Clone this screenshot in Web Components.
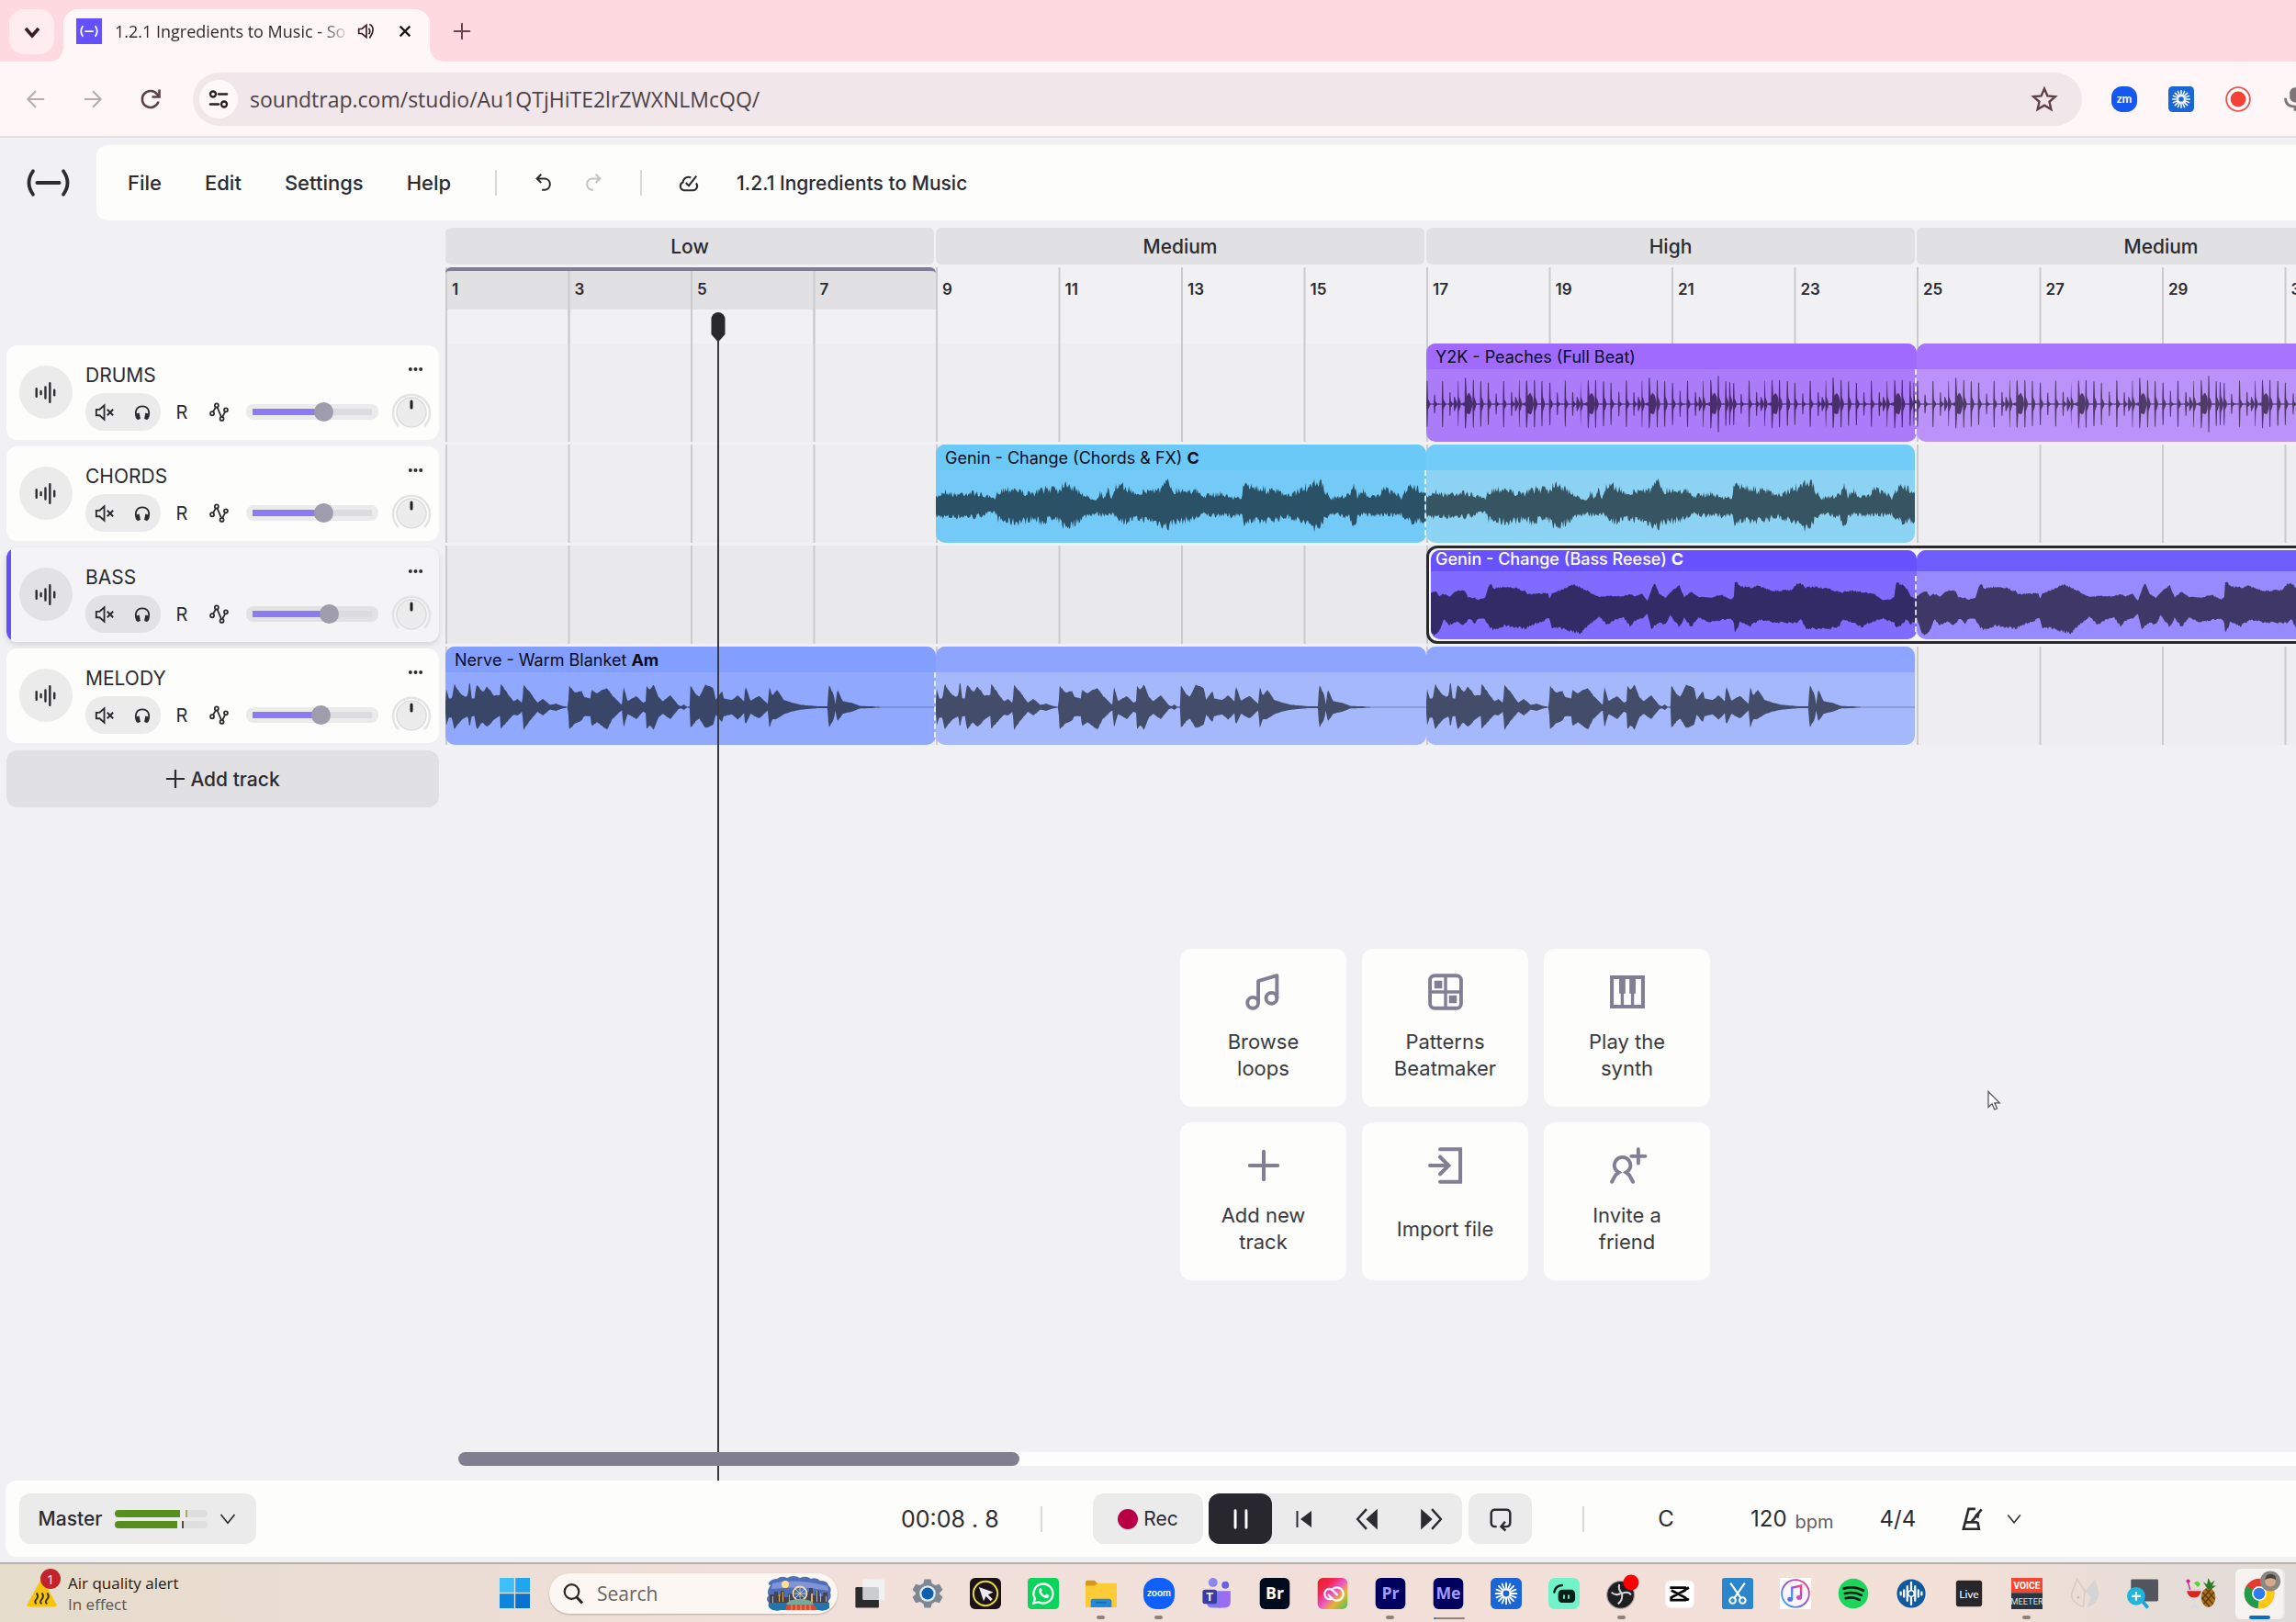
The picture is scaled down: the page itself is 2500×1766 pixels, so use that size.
<!DOCTYPE html>
<html lang="en">
<head>
<meta charset="utf-8">
<title>1.2.1 Ingredients to Music - Soundtrap</title>
<style>
    html, body {
        margin: 0;
        height: 100%;
        overflow: hidden;
    }

    body {
        --ink: #2b2b30;
        --app-bg: #f1f1f4;
        --panel: #fdfdfc;
        --accent: #8b7bf3;
        --section: 534px;
        font-family: Inter, "Liberation Sans", sans-serif;
        font-size: 21px;
        color: var(--ink);
    }
</style>
</head>
<body>
<studio-window></studio-window>

<script>
const ICONS = {
    chevron: '<path d="M5 8l7 8 7-8" fill="none" stroke="currentColor" stroke-width="2.2"/>',
    thinChevron: '<path d="M3 6l9 11 9-11" fill="none" stroke="currentColor" stroke-width="2"/>',
    boldChevron: '<path d="M5 8l7 8 7-8" fill="none" stroke="currentColor" stroke-width="3.6"/>',
    brand: '<rect width="24" height="24" fill="#6450ff"/><path d="M6 7.5q-3 4.500 0 9M18 7.500q3 4.500 0 9M8.500 12h7" fill="none" stroke="#fff" stroke-width="1.500" stroke-linecap="round"/>',
    speaker: '<path d="M2 9h4l6-5v16l-6-5H2z" fill="none" stroke="currentColor" stroke-width="2"/><path d="M15 8q3 4 0 8M16 3q9 4 0 18" fill="none" stroke="currentColor" stroke-width="2"/>',
    cross: '<path d="M4 4l16 16M20 4L4 20" stroke="currentColor" stroke-width="3.400"/>',
    plus: '<path d="M12 2v20M2 12h20" stroke="currentColor" stroke-width="2.400" stroke-linecap="round"/>',
    back: '<path d="M22 12H3M12 2.500L2.500 12l9.500 9.500" fill="none" stroke="currentColor" stroke-width="2.200"/>',
    forward: '<path d="M2 12h19M12 2.500l9.500 9.500-9.500 9.500" fill="none" stroke="currentColor" stroke-width="2.200"/>',
    reload: '<path d="M20.500 14.500A9 9 0 1 1 19 6.500l2 2" fill="none" stroke="currentColor" stroke-width="2.600"/><path d="M21.500 1.500v8h-8" fill="none" stroke="currentColor" stroke-width="2.600"/>',
    tune: '<path d="M12 6.500h9M3 17.500h9" stroke="currentColor" stroke-width="2.600" stroke-linecap="round"/><circle cx="6" cy="6.500" r="3" fill="none" stroke="currentColor" stroke-width="2.300"/><circle cx="18" cy="17.500" r="3" fill="none" stroke="currentColor" stroke-width="2.300"/>',
    star: '<path d="M12 2.800l2.700 6.300 6.800.6-5.100 4.500 1.500 6.700-5.900-3.500-5.900 3.500 1.500-6.700-5.100-4.500 6.800-.6z" fill="none" stroke="currentColor" stroke-width="1.900"/>',
    zm: '<rect width="24" height="24" rx="10" fill="#1558f0"/><text x="12" y="15.600" text-anchor="middle" font-family="Lato" font-weight="700" font-size="11" fill="#fff">zm</text>',
    burst: '<rect width="24" height="24" rx="4" fill="#1a66d6"/><path d="M12 4v16M4 12h16M6.300 6.300l11.400 11.400M17.700 6.300L6.300 17.700M8.900 4.600l6.200 14.800M15.100 4.600L8.900 19.400M4.600 8.900l14.800 6.200M4.600 15.100l14.800-6.200" stroke="#fff" stroke-width="1.300" stroke-linecap="round"/><circle cx="12" cy="12" r="3" fill="#1a66d6" stroke="#fff" stroke-width="1.200"/>',
    recorder: '<circle cx="12" cy="12" r="11" fill="#fff" stroke="#f0524e" stroke-width="1.600"/><circle cx="12" cy="12" r="7.200" fill="#f44336"/>',
    mic: '<rect x="7" y="1" width="10" height="14" rx="5" fill="currentColor"/><path d="M3 11q0 8 9 8t9-8M12 19v4" fill="none" stroke="currentColor" stroke-width="2.400"/>',
    logo: '<g fill="none" stroke="currentColor" stroke-linecap="round"><path d="M5 3.500q-6 8.500 0 17M27 3.500q6 8.500 0 17" stroke-width="2.500"/><path d="M8 12h16" stroke-width="2.700"/></g>',
    undo: '<path d="M9 2L4 7l5 5M5 7h8.500a6.800 6.800 0 0 1 0 13.500H10" fill="none" stroke="currentColor" stroke-width="2.200"/>',
    redo: '<path d="M15 2l5 5-5 5M19 7h-8.500a6.800 6.800 0 0 0 0 13.500H12" fill="none" stroke="currentColor" stroke-width="2.200"/>',
    cloud: '<path d="M14.500 6a6.500 6.500 0 0 0-9.500 5.500A5 5 0 0 0 6 21h11a5 5 0 0 0 3.500-8.500" fill="none" stroke="currentColor" stroke-width="2.200"/><path d="M8.500 12l3.500 3.500 9-11.500" fill="none" stroke="currentColor" stroke-width="2.200"/>',
    wave: '<path d="M2.500 8v8M7 10.500v3M11.500 6.500v11M16 2.500v19M20.500 9.500v5" stroke="currentColor" stroke-width="2.200" stroke-linecap="round"/>',
    dots: '<circle cx="4" cy="12" r="2.800" fill="currentColor"/><circle cx="12" cy="12" r="2.800" fill="currentColor"/><circle cx="20" cy="12" r="2.800" fill="currentColor"/>',
    mute: '<path d="M2 8.500h4l5.500-5v17l-5.500-5H2z" fill="none" stroke="currentColor" stroke-width="2"/><path d="M15 8.500l7 7M22 8.500l-7 7" stroke="currentColor" stroke-width="2.200"/>',
    phones: '<path d="M5 20C1 10 5 4 12 4s11 6 7 16" fill="none" stroke="currentColor" stroke-width="2.200"/><path d="M3 14l5-1.500 1.500 8L5.500 22zM21 14l-5-1.500-1.500 8L18.500 22z" fill="currentColor"/>',
    automation: '<g fill="none" stroke="currentColor" stroke-width="2"><circle cx="3.500" cy="14" r="2.300"/><circle cx="9" cy="4" r="2.300"/><circle cx="15.500" cy="20.500" r="2.300"/><circle cx="20.500" cy="9.500" r="2.300"/><path d="M4.500 12l3.500-6M9.800 6.200l5 12M16.200 18.300l3.500-6.700"/></g>',
    notes: '<g fill="none" stroke="currentColor" stroke-width="2.300"><circle cx="5" cy="19" r="3.500"/><circle cx="17" cy="16" r="3.500"/><path d="M8.500 19V5L20.500 1.500V16" stroke-linejoin="round"/></g>',
    pads: '<rect x="2" y="1.500" width="20" height="21" rx="3" fill="none" stroke="currentColor" stroke-width="2.300"/><path d="M12 2v20M2 12h20" stroke="currentColor" stroke-width="2"/><path d="M4.800 4.800h5v5h-5zM14.200 14.200h5v5h-5z" fill="currentColor"/>',
    piano: '<path d="M2 2.500h20v19H2z" fill="none" stroke="currentColor" stroke-width="2.400"/><path d="M8.700 12v9M15.300 12v9" stroke="currentColor" stroke-width="2"/><path d="M6.700 3h4v10h-4zM13.300 3h4v10h-4z" fill="currentColor"/>',
    add: '<path d="M12 3v18M3 12h18" stroke="currentColor" stroke-width="2.400" stroke-linecap="round"/>',
    importFile: '<path d="M8.500 1.500h13v21h-13M2 12h11M8.500 6.500L14 12l-5.500 5.500" fill="none" stroke="currentColor" stroke-width="2.400" stroke-linecap="round"/>',
    invite: '<path d="M2 22.500l2.500-4.500 2-1.500a5.200 5.200 0 1 1 4.600 0l2 1.500 2.500 4.500M19 1.500v9M14.500 6h9" fill="none" stroke="currentColor" stroke-width="2.300" stroke-linecap="round"/>',
    pause: '<path d="M6.500 3.500v17M17.500 3.500v17" stroke="currentColor" stroke-width="2.700" stroke-linecap="round"/>',
    toStart: '<path d="M4.500 3v18" stroke="currentColor" stroke-width="2"/><path d="M20 3v18L8 12z" fill="currentColor"/>',
    rewind: '<path d="M11 2L2 12l9 10" fill="none" stroke="currentColor" stroke-width="2.300"/><path d="M22 1.500v21L10.500 12z" fill="currentColor"/>',
    fastForward: '<path d="M13 2l9 10-9 10" fill="none" stroke="currentColor" stroke-width="2.300"/><path d="M2 1.500v21L13.500 12z" fill="currentColor"/>',
    loop: '<path d="M8 19.500H6a3.500 3.500 0 0 1-3.500-3.500V6A3.500 3.500 0 0 1 6 2.500h12A3.500 3.500 0 0 1 21.500 6v10a3.500 3.500 0 0 1-3.500 3.500h-5M16.500 14.500L12.500 19.500l4.500 4" fill="none" stroke="currentColor" stroke-width="2.300"/>',
    metronome: '<path d="M15 2.500H8.500L3.500 22h15l-1.300-7M5.500 15.500h11.500M11 15.500L21 3" fill="none" stroke="currentColor" stroke-width="2.400"/><path d="M14 9l4 3 1-4-2-2z" fill="currentColor"/>',
    warning: '<path d="M12 2.500q1 0 1.700 1.200l9 16.300q1 2-1 2.300H2.300q-2-.3-1-2.300l9-16.300Q11 2.500 12 2.500z" fill="#f6c40c"/><path d="M8 12q2 2.200 0 4.500t0 3.500M12 12q2 2.200 0 4.500t0 3.500M16 12q2 2.200 0 4.500t0 3.500" fill="none" stroke="#3c3410" stroke-width="1.400"/>',
    windows: '<path d="M0 0h11.500v11.500H0z" fill="#3cc0f7"/><path d="M12.500 0H24v11.500H12.500z" fill="#1ea5ee"/><path d="M0 12.500h11.500V24H0z" fill="#0f86de"/><path d="M12.500 12.500H24V24H12.500z" fill="#0872ce"/>',
    search: '<circle cx="10.500" cy="10" r="7.800" fill="none" stroke="currentColor" stroke-width="2.200"/><path d="M16 16l6 6.500" stroke="currentColor" stroke-width="3"/>',
    skyline: '<path d="M4 10Q0 9 3 6t8-3q5-4 11-1 7-4 14 0 7-3 12 1 6-2 10 2 8 0 9 5 4 3 2 8 2 5-2 9 2 6-8 7-5 4-11 2H17q-6 3-10 0-7-1-5-7-4-4 0-8-3-4 2-11z" fill="#4f70b8"/><path d="M6 8q24-6 60 3l1 5q-28-6-62-2z" fill="#8394d6"/><circle cx="20" cy="9" r="4" fill="#ffe08c"/><path d="M3 20h5v-3h4v5h3v-6h4v7h4v-4h5v-4h3v8h12v-6h3v-4h4v8h3v-5h4v6h4v-4h5v14H3z" fill="#454455"/><path d="M6 22h1v8H6zM13 20h1v8h-1zM17 17h1v11h-1zM24 20h1v8h-1zM48 19h2v10h-2zM54 16h1v12h-1zM58 19h1v9h-1zM64 22h1v6h-1z" fill="#e8b04a"/><circle cx="36" cy="19" r="7.500" fill="none" stroke="#eed9a0" stroke-width="1.800"/><path d="M36 12v14M29 19h14M31 14l10 10M41 14L31 24" stroke="#eed9a0" stroke-width=".8"/><path d="M2 29h66v6q-5 4-12 2H14q-9 2-12-4z" fill="#2474a8"/><path d="M21 31q2-6 15-6t15 6z" fill="#78aa9c"/><path d="M22 31h29l4 6H20z" fill="#d94a30"/><path d="M27 31v6M32 31v6M37 31v6M42 31v6M47 31v6" stroke="#ffb08a" stroke-width=".8"/>',
    taskView: '<rect x="1" y="7" width="18" height="16" rx="1" fill="#2c2b2b"/><rect x="6.500" y="1" width="17" height="16" rx="1" fill="#f3f5f6" opacity=".8"/>',
    settings: '<path d="M9.500 1h5l.8 3.200 2.600 1.500 3.200-.9 2.500 4.300-2.400 2.300v1.200l2.400 2.300-2.500 4.300-3.200-.9-2.600 1.500-.8 3.200h-5l-.8-3.200-2.600-1.500-3.200.9-2.500-4.300 2.400-2.300v-1.200L.4 9.100l2.500-4.300 3.200.9 2.600-1.500z" fill="#7c8791"/><circle cx="12" cy="12" r="6.200" fill="#dcecf7"/><circle cx="12" cy="12" r="4.600" fill="#0f5fae"/>',
    pointer: '<rect width="24" height="24" rx="4" fill="#1d1217"/><circle cx="12" cy="12" r="9.300" fill="none" stroke="#e5de2b" stroke-width="1.400"/><path d="M7 7l11 4-4 1.800 3.500 3.500-1.500 1.500-3.600-3.600-1.800 3.700z" fill="#e9e9ee"/>',
    whatsapp: '<rect width="24" height="24" rx="3" fill="#0bd45c"/><path d="M4.500 19.500l1.100-3.700a7.400 7.400 0 1 1 2.800 2.700z" fill="none" stroke="#fff" stroke-width="1.600"/><path d="M9.200 8q.8-1 1.500.3l.5 1.400-.8 1.100q1 1.900 2.900 2.700l1-1.200 2 1q.6 1.700-1.300 2.300-1.800.5-4.600-2-2.600-2.800-1.200-5.600z" fill="#fff"/>',
    folder: '<path d="M0 3.500q0-1.500 1.500-1.500H7l2.500 2.500-2 2H0z" fill="#d9971a"/><path d="M0 6h7l2.500-2H24v18.500H0z" fill="#fdcb35"/><path d="M4 22.500V18q0-2 2-2h12q2 0 2 2v4.500z" fill="#2389d6"/><path d="M8 19h8" stroke="#0b5c9f" stroke-width=".8"/>',
    zoomApp: '<rect width="24" height="24" rx="10.500" fill="#0f60fb"/><text x="12" y="14.200" text-anchor="middle" font-family="Lato" font-weight="700" font-size="7.500" fill="#fff">zoom</text>',
    teams: '<circle cx="9" cy="3.500" r="3.500" fill="#8a87ef"/><circle cx="18.500" cy="5.500" r="2.800" fill="#6b5fe0"/><path d="M4 10h11v13H9q-5 0-5-5z" fill="#7f79ea"/><path d="M15 10h7.500v8q0 5-5 5H13z" fill="#9a6cf0"/><rect x="1" y="9" width="11" height="11" rx="2" fill="#3b3ba8"/><text x="6.500" y="17.800" text-anchor="middle" font-family="Roboto" font-weight="700" font-size="9" fill="#fff">T</text>',
    bridge: '<rect x=".5" width="23" height="24" rx="4" fill="#000b1d"/><text x="12" y="16.300" text-anchor="middle" font-family="Open Sans" font-weight="700" font-size="12.500" fill="#fff">Br</text>',
    creative: '<defs><linearGradient id="cc" x1="0" y1="0" x2="1" y2="1"><stop offset="0" stop-color="#e2231a"/><stop offset=".3" stop-color="#f5265b"/><stop offset=".5" stop-color="#e857c8"/><stop offset=".7" stop-color="#e9b62b"/><stop offset="1" stop-color="#3fc46a"/></linearGradient></defs><rect x=".5" width="23" height="24" rx="4" fill="url(#cc)"/><path d="M11.500 15.500l-1 .8A4 4 0 1 1 9.200 8.400q1.800 0 3.200 1.500l3 3M12 8.500A5 5 0 1 1 15 17.300q-2.200 0-3.500-1.400L8.800 13" fill="none" stroke="#fff" stroke-width="1.600" stroke-linecap="round"/>',
    premiere: '<rect x=".5" width="23" height="24" rx="4" fill="#00005e"/><text x="12" y="16.300" text-anchor="middle" font-family="Open Sans" font-weight="700" font-size="12.500" fill="#a39bff">Pr</text>',
    encoder: '<rect x=".5" width="23" height="24" rx="4" fill="#00005e"/><text x="12" y="16.300" text-anchor="middle" font-family="Open Sans" font-weight="700" font-size="12.500" fill="#a39bff">Me</text>',
    mint: '<rect width="24" height="24" rx="5" fill="#71f3ca"/><rect x="7.500" y="9" width="13" height="10" rx="3" fill="#052019"/><path d="M4.500 11q1-5 6-5.300" fill="none" stroke="#052019" stroke-width="1.700" stroke-linecap="round"/><path d="M12 13v3M15.500 13v3" stroke="#71f3ca" stroke-width="1.300"/>',
    obs: '<circle cx="11" cy="13" r="10.500" fill="#1f1e21" stroke="#a3a1a3" stroke-width=".8"/><path d="M10 5q-1 4 2 7 5-2 7 1M11 12q-4 2-7-1M12 12q1 5-3 8" fill="none" stroke="#d9d7da" stroke-width="1.400"/><circle cx="19" cy="3.500" r="6" fill="#fb0007"/>',
    capcut: '<rect x="1" y="2" width="22" height="21" rx="4" fill="#fff"/><path d="M5.500 8.500V7.500H16v2L5.500 15v2H16v-2L5.500 9.500M16 9l3-1.500M16 15.500l3 1.500" fill="none" stroke="#050505" stroke-width="2"/>',
    snip: '<rect width="24" height="24" rx="2" fill="#2b86cb"/><g fill="none" stroke="#fff" stroke-width="1.500"><circle cx="8.200" cy="17.300" r="2.300"/><circle cx="15.800" cy="17.300" r="2.300"/><path d="M6.500 4l8 11.500M17.500 4l-8 11.500"/></g>',
    itunes: '<defs><linearGradient id="tune" x1="0" y1="1" x2="1" y2="0"><stop offset="0" stop-color="#28b7f4"/><stop offset=".5" stop-color="#8b55e0"/><stop offset="1" stop-color="#f8456a"/></linearGradient></defs><rect width="24" height="24" fill="#fff"/><circle cx="12" cy="12" r="10.500" fill="#fbf5fb" stroke="url(#tune)" stroke-width="1.300"/><path d="M9.300 16V7.500l7-1.500v8.500" fill="none" stroke="url(#tune)" stroke-width="1.700"/><ellipse cx="7.900" cy="16.400" rx="2.100" ry="1.800" fill="#5a72ea"/><ellipse cx="14.900" cy="15" rx="2.100" ry="1.800" fill="#c44fc2"/>',
    spotify: '<circle cx="12" cy="12" r="11.500" fill="#1dd45f"/><path d="M4.700 8.200q8-2.300 15 1.500M5.500 12q7-1.900 12.800 1.300M6.200 15.600q5.800-1.500 10.500 1.200" fill="none" stroke="#0a1a10" stroke-width="1.900" stroke-linecap="round"/>',
    pulse: '<circle cx="12" cy="12" r="11" fill="#10599c"/><path d="M4 11v2M6.500 9.500v5M9 6.500v11M12 3.500v17M15 6.500v11M17.500 9.500v5M20 11v2" stroke="#fff" stroke-width="1.600" stroke-linecap="round"/><circle cx="12" cy="12" r="2.300" fill="#10599c" stroke="#fff"/>',
    live: '<rect x="2" y="2" width="20" height="20" rx="2" fill="#26262b"/><text x="12" y="15.200" text-anchor="middle" font-family="Lato" font-size="8.500" fill="#fff">Live</text>',
    voicemeeter: '<path d="M0 0h24v11.500H0z" fill="#f5472f"/><path d="M0 11.500h24V24H0z" fill="#2b3443"/><text x="12" y="8.700" text-anchor="middle" font-family="Roboto" font-weight="700" font-size="7.200" fill="#fff">VOICE</text><text x="12" y="20.300" text-anchor="middle" font-family="Roboto" font-size="6.600" fill="#dfe3ea">MEETER</text>',
    fox: '<path d="M2 12L6 1l6 9-1 12q-6-1-9-7z" fill="none" stroke="#d6cac4"/><path d="M12 10l8-9 3 11q-1 8-10 11l4-8z" fill="#c6cdd2" opacity=".6"/><circle cx="7" cy="15" r="1" fill="#c8bcb6"/>',
    magnify: '<rect x="3" y="1" width="21" height="17" rx="1" fill="#53565e"/><path d="M12 18l4 5" stroke="#1ca5d8" stroke-width="2.600"/><circle cx="7" cy="14" r="7" fill="#1fb5dd"/><path d="M7 10.500v7M3.500 14h7" stroke="#fff" stroke-width="1.500"/>',
    fruit: '<ellipse cx="18" cy="15" rx="5.500" ry="7.500" fill="#a8711c"/><path d="M13.500 11l8 9M13 15l6 7M16 8.500l7 8M22.500 11l-8 9M20 8.500l-7 8" stroke="#5f3a0e"/><path d="M17 8l-3-5 3 2 1-5 2 4 3-2-2 4 3 0-4 3z" fill="#2c7a24"/><path d="M1 8h12q0 7-5 8v5l3 2H4l3-2v-5Q1 15 1 8z" fill="#d5dbe0"/><path d="M1.500 10h11q-1 5-5.500 5t-5.500-5z" fill="#d9251c"/><path d="M4 9L2 2" stroke="#d11fa0"/><circle cx="2.500" cy="2.500" r="1.500" fill="#d11fa0"/><path d="M7 4q3-3 5 1l-2 2z" fill="#5fd03c"/>',
    chrome: '<circle cx="12" cy="12" r="11.500" fill="#e33b2e"/><path d="M12 12L2 6.300A11.500 11.500 0 0 0 11 23.400z" fill="#1e9e4a"/><path d="M12 12L11 23.400A11.500 11.500 0 0 0 22.500 7H12z" fill="#fdc812"/><circle cx="12" cy="12" r="5.600" fill="#fff"/><circle cx="12" cy="12" r="4.500" fill="#2f7cf0"/><circle cx="20.500" cy="2.500" r="7.800" fill="#8a8782"/><circle cx="20.500" cy="2.500" r="4.200" fill="#d8a88e"/><path d="M16.300 1.500q1-5 4.500-4.500 4 0 4 4.500-4-2.500-8.500 0z" fill="#4c423c"/>',
};

// Envelope points: [x, peak above the centre line, peak below], loop length in the same units.
const WAVES = {
    melody: {
        length: 1117, step: 2, grain: 0.06, colors: ['#3a4668', '#434c68'],
        points: [[0, 20, 20], [2, 60, 60], [8, 30, 35], [15, 30, 35], [20, 78, 75], [35, 45, 45], [45, 35, 35], [51, 40, 30], [54, 80, 60], [57, 80, 60], [59, 30, 30], [66, 30, 30], [71, 78, 75], [85, 50, 50], [95, 70, 68], [110, 40, 42], [124, 40, 30], [126, 78, 72], [140, 50, 50], [155, 20, 25], [165, 28, 28], [175, 14, 14], [178, 75, 75], [190, 55, 50], [210, 15, 15], [222, 28, 28], [238, 8, 8], [252, 12, 12], [265, 5, 5], [279, 1, 1], [282, 72, 75], [295, 50, 55], [310, 55, 45], [316, 34, 30], [330, 30, 30], [333, 60, 65], [345, 45, 50], [355, 58, 60], [368, 65, 76], [380, 40, 40], [400, 10, 12], [403, 12, 12], [405, 74, 72], [415, 20, 22], [435, 38, 40], [450, 15, 15], [456, 20, 20], [458, 72, 74], [465, 60, 60], [475, 75, 75], [485, 35, 35], [495, 20, 22], [512, 40, 40], [530, 8, 8], [537, 3, 3], [543, 10, 10], [549, 2, 2], [556, 2, 2], [558, 74, 70], [570, 45, 48], [578, 35, 38], [592, 75, 70], [610, 65, 60], [616, 25, 25], [630, 55, 50], [634, 30, 30], [652, 24, 24], [666, 40, 42], [680, 20, 20], [683, 72, 60], [695, 22, 22], [715, 38, 38], [735, 10, 10], [737, 72, 72], [745, 38, 40], [755, 60, 40], [770, 25, 24], [790, 15, 14], [810, 8, 8], [850, 3, 3], [870, 3, 3], [873, 76, 68], [885, 40, 40], [888, 10, 12], [893, 60, 48], [905, 20, 22], [925, 15, 15], [945, 4, 4], [970, 3, 3], [990, 1, 1], [1117, 1, 1]],
    },
    chords: {
        length: 1117, step: 2, grain: 0.42, colors: ['#2b5166', '#375463'],
        points: [[0, 30, 45], [20, 58, 48], [40, 42, 48], [60, 48, 46], [90, 50, 48], [110, 38, 38], [135, 24, 28], [142, 56, 58], [160, 66, 68], [180, 68, 70], [200, 50, 65], [220, 44, 55], [240, 62, 70], [260, 66, 55], [270, 84, 66], [280, 55, 62], [295, 102, 90], [310, 70, 80], [330, 52, 56], [345, 32, 40], [365, 24, 34], [375, 52, 40], [385, 28, 36], [392, 60, 36], [400, 28, 40], [407, 70, 42], [430, 76, 68], [450, 52, 56], [470, 52, 58], [490, 62, 62], [510, 62, 74], [530, 96, 90], [540, 60, 66], [560, 62, 66], [580, 62, 58], [595, 56, 52], [605, 36, 36], [630, 42, 42], [650, 48, 38], [670, 32, 46], [690, 30, 36], [697, 34, 40], [700, 74, 68], [725, 76, 68], [740, 68, 66], [760, 58, 62], [780, 56, 56], [800, 36, 46], [820, 52, 56], [840, 72, 74], [855, 68, 80], [868, 104, 98], [878, 84, 68], [890, 50, 56], [900, 26, 32], [930, 36, 42], [945, 52, 56], [952, 86, 86], [960, 34, 50], [972, 64, 34], [985, 28, 40], [995, 48, 46], [1005, 34, 40], [1022, 64, 40], [1045, 52, 42], [1060, 28, 36], [1067, 58, 66], [1080, 74, 64], [1100, 64, 66], [1117, 68, 64]],
    },
    bass: {
        length: 1046, step: 2, grain: 0.12, colors: ['#322b66', '#3f3866'],
        points: [[0, 30, 42], [10, 44, 95], [20, 50, 103], [28, 32, 90], [37, 40, 48], [50, 30, 68], [65, 52, 56], [80, 52, 70], [90, 28, 46], [103, 25, 62], [110, 20, 46], [125, 24, 50], [135, 74, 76], [145, 60, 86], [170, 65, 70], [190, 60, 76], [210, 50, 80], [215, 38, 76], [240, 40, 60], [260, 42, 46], [263, 20, 46], [268, 42, 82], [285, 52, 78], [310, 72, 90], [330, 62, 95], [350, 44, 62], [370, 30, 40], [385, 32, 66], [405, 32, 50], [420, 30, 40], [435, 40, 72], [445, 30, 54], [460, 42, 46], [472, 15, 30], [480, 54, 86], [487, 78, 70], [497, 40, 60], [510, 26, 66], [520, 42, 34], [540, 72, 76], [550, 28, 44], [565, 48, 76], [580, 30, 42], [605, 26, 60], [630, 36, 50], [650, 20, 46], [656, 30, 60], [658, 84, 100], [670, 66, 56], [690, 62, 72], [710, 66, 50], [740, 50, 60], [780, 52, 60], [790, 74, 62], [798, 74, 46], [809, 62, 78], [829, 64, 82], [859, 56, 82], [880, 46, 72], [889, 46, 50], [904, 50, 56], [929, 46, 74], [954, 40, 55], [974, 18, 46], [989, 20, 56], [998, 30, 60], [1002, 78, 78], [1012, 74, 70], [1024, 58, 50], [1034, 30, 66], [1046, 20, 50]],
    },
    drums: { length: 1115, step: 1, grain: 0.05, colors: ['#4a2d6b', '#4f3a68'], points: drumHits() },
};

const THEMES = {
    drums: [['#a06aff', '#ab7cfa'], ['#a773ff', '#ba92fa']],
    chords: [['#6bc9f7', '#73caf7'], ['#72ccf8', '#8cd2f2']],
    bass: [['#6852ff', '#7f6cff'], ['#705dff', '#978aff']],
    melody: [['#829fff', '#91a8ff'], ['#8da5ff', '#a5b8fc']],
};

// Eight bars of the same beat with a busier ending.
function drumHits() {
    const points = [];
    const hit = (x, peak, tail) => {
        points.push([x - 2, 2, 2], [x - 1, peak, peak * 0.97], [x + 1, peak, peak * 0.97], [x + 2, tail, tail], [x + 5, tail * 0.5, tail * 0.5], [x + 7, 2, 2]);
    };
    const step = 1115 / 64;
    for (let bar = 0; bar < 8; bar++) {
        const at = (n) => Math.round((bar * 8 + n) * step) + 2;
        hit(at(0), bar ? 72 : 78, 18);
        hit(at(1), 32 + bar * 3 % 14, 8);
        hit(at(2), 78, 16);
        hit(at(3), 40, 10);
        hit(at(3.55), 24, 18);
        hit(at(4), 78, 24);
        points.push([at(5) - 2, 6, 6], [at(5) - 1, bar % 3 ? 80 : 88, 80], [at(5) + 1, bar % 3 ? 80 : 88, 80], [at(5) + 3, 28, 30], [at(5) + 8, 38, 34], [at(5) + 11, 32, 32], [at(5) + 14, 22, 16]);
        hit(at(6), bar === 4 ? 96 : 80, 24);
        hit(at(7), 76, 24);
        if (bar === 7 || bar === 4) {
            hit(at(7.5), 72, 28);
        }
    }
    return points;
}

function wavePath(wave, width, centre) {
    let seed = 7;
    const noise = () => {
        seed = (seed * 16807) % 2147483647;
        return seed / 2147483647;
    };
    const scale = width / wave.length;
    const upper = [];
    const lower = [];
    let i = 0;
    for (let x = 0; x <= wave.length; x += wave.step) {
        while (i < wave.points.length - 2 && wave.points[i + 1][0] < x) i++;
        const [x0, u0, d0] = wave.points[i];
        const [x1, u1, d1] = wave.points[i + 1];
        const t = Math.min(1, Math.max(0, (x - x0) / (x1 - x0)));
        const up = (u0 + (u1 - u0) * t) * (1 - noise() * wave.grain);
        const down = (d0 + (d1 - d0) * t) * (1 - noise() * wave.grain);
        upper.push(`${(x * scale).toFixed(1)} ${(centre - up / 3).toFixed(1)}`);
        lower.unshift(`${(x * scale).toFixed(1)} ${(centre + down / 3).toFixed(1)}`);
    }
    return `M${upper.join('L')}L${lower.join('L')}Z`;
}

class StudioElement extends HTMLElement {
    constructor() {
        super();
        this.attachShadow({ mode: 'open' });
    }

    connectedCallback() {
        this.shadowRoot.innerHTML = `
            <style>
                * { box-sizing: border-box; }
                button { display: flex; align-items: center; font: inherit; color: inherit; background: none; border: 0; padding: 0; margin: 0; cursor: pointer; }
                input { font: inherit; color: inherit; background: none; border: 0; outline: 0; padding: 0; margin: 0; min-width: 0; }
                ${this.styles()}
            </style>
            ${this.render()}
        `;
    }

    styles() { return ''; }

    render() { return ''; }
}

class UiIcon extends StudioElement {
    styles() {
        const w = this.getAttribute('width') || this.getAttribute('size') || 24;
        return `
            :host { display: inline-block; flex: none; width: ${w}px; height: ${this.getAttribute('size') || 24}px; }
            svg { display: block; width: 100%; height: 100%; overflow: visible; }
        `;
    }

    render() {
        return `<svg viewBox="${this.getAttribute('box') || '0 0 24 24'}" aria-hidden="true">${ICONS[this.getAttribute('name')]}</svg>`;
    }
}

class BrowserTabs extends StudioElement {
    styles() {
        return `
            :host { display: flex; height: 67px; background: #fed9e0; color: #3a1d25; padding-left: 10px; font-family: "Open Sans", sans-serif; font-size: 18px; }
            .list { width: 49px; height: 49px; margin-top: 10px; border-radius: 16px; background: #ffecef; justify-content: center; }
            .tab { position: relative; display: flex; align-items: center; width: 399px; height: 57px; margin: 10px 0 0 10px; padding: 0 19px 10px 14px; border-radius: 16px 16px 0 0; background: #fff7f7; }
            .tab::before, .tab::after { content: ""; position: absolute; bottom: 0; width: 14px; height: 14px; }
            .tab::before { right: 100%; background: radial-gradient(circle at 0 0, transparent 13px, #fff7f7 14px); }
            .tab::after { left: 100%; background: radial-gradient(circle at 100% 0, transparent 13px, #fff7f7 14px); }
            .title { flex: 1; margin: 0 8px 0 14px; white-space: nowrap; overflow: hidden; color: #33282b; mask-image: linear-gradient(90deg, #000 88%, transparent); }
            .close { margin-left: 24px; color: #1d1518; }
            .new { margin-left: 25px; color: #6d4550; }
        `;
    }

    render() {
        return `
            <button class="list" aria-label="Search tabs"><ui-icon name="boldChevron" size="24"></ui-icon></button>
            <div class="tab">
                <ui-icon name="brand" size="28"></ui-icon>
                <span class="title">1.2.1 Ingredients to Music - So</span>
                <ui-icon name="speaker" size="20"></ui-icon>
                <button class="close" aria-label="Close tab"><ui-icon name="cross" size="16"></ui-icon></button>
            </div>
            <button class="new" aria-label="New tab"><ui-icon name="plus" size="20"></ui-icon></button>
        `;
    }
}

class BrowserToolbar extends StudioElement {
    styles() {
        return `
            :host { display: flex; align-items: center; height: 83px; background: #fff7f7; border-bottom: 2px solid #e8dfe2; padding-left: 28px; font-family: "Open Sans", sans-serif; font-size: 23px; color: #5e3f47; overflow: hidden; }
            .nav { display: flex; gap: 40px; margin-right: 34px; }
            .off { color: #b5aaac; }
            .address { flex: 1; display: flex; align-items: center; height: 58px; padding: 0 26px 0 7px; border-radius: 29px; background: #f1e6e9; }
            .site { width: 42px; height: 42px; border-radius: 50%; background: #fff8f9; justify-content: center; margin-right: 13px; color: #2a1d21; }
            input { flex: 1; color: #4d4246; }
            .extensions { display: flex; gap: 34px; width: 233px; padding-left: 32px; color: #7d7577; }
        `;
    }

    render() {
        return `
            <div class="nav">
                <button class="off" aria-label="Back"><ui-icon name="back" size="22"></ui-icon></button>
                <button class="off" aria-label="Forward"><ui-icon name="forward" size="22"></ui-icon></button>
                <button aria-label="Reload"><ui-icon name="reload" size="24"></ui-icon></button>
            </div>
            <div class="address">
                <button class="site" aria-label="Site information"><ui-icon name="tune" size="24"></ui-icon></button>
                <input type="text" aria-label="Address" value="soundtrap.com/studio/Au1QTjHiTE2lrZWXNLMcQQ/">
                <button aria-label="Bookmark"><ui-icon name="star" size="30"></ui-icon></button>
            </div>
            <div class="extensions">
                <ui-icon name="zm" size="28"></ui-icon>
                <ui-icon name="burst" size="28"></ui-icon>
                <ui-icon name="recorder" size="28"></ui-icon>
                <ui-icon name="mic" size="28"></ui-icon>
            </div>
        `;
    }
}

class StudioHeader extends StudioElement {
    styles() {
        return `
            :host { display: flex; height: 90px; padding-top: 8px; font-weight: 500; }
            .home { width: 105px; justify-content: center; }
            .bar { flex: 1; display: flex; align-items: center; padding-left: 34px; border-radius: 12px 0 0 12px; background: var(--panel); }
            nav { display: flex; gap: 47px; font-size: 22px; }
            .rule { width: 2px; height: 28px; background: #d9d9dc; margin: 0 40px; }
            .rule.first { margin-left: 48px; }
            .redo { margin-left: 32px; color: #c3c3c6; }
            .name { margin-left: 41px; }
        `;
    }

    render() {
        return `
            <button class="home" aria-label="Soundtrap"><ui-icon name="logo" width="49" size="36" box="0 0 32 24"></ui-icon></button>
            <div class="bar">
                <nav>
                    <button>File</button>
                    <button>Edit</button>
                    <button>Settings</button>
                    <button>Help</button>
                </nav>
                <span class="rule first"></span>
                <button aria-label="Undo"><ui-icon name="undo" size="22"></ui-icon></button>
                <button class="redo" aria-label="Redo"><ui-icon name="redo" size="22"></ui-icon></button>
                <span class="rule"></span>
                <ui-icon name="cloud" size="22"></ui-icon>
                <span class="name">1.2.1 Ingredients to Music</span>
            </div>
        `;
    }
}

class TrackCard extends StudioElement {
    styles() {
        return `
            :host { display: flex; height: 103px; padding: 16px 7px 9px 14px; border-radius: 12px; background: var(--panel); --chip: #ebebec; }
            :host([selected]) { background: linear-gradient(90deg, #6450ff 5px, #f4f4f7 5px); box-shadow: 0 3px 6px rgba(0, 0, 0, 0.12); --chip: #e2e2e4; }
            .avatar { width: 58px; height: 58px; margin-top: 6px; border-radius: 50%; background: var(--chip); display: grid; place-items: center; }
            .body { flex: 1; margin-left: 14px; }
            .top { display: flex; justify-content: space-between; align-items: center; height: 32px; font-size: 21px; }
            .more { align-self: flex-start; margin-right: 10px; }
            .controls { display: flex; align-items: center; height: 41px; margin-top: 4px; }
            .pill { display: flex; justify-content: space-between; align-items: center; width: 82px; height: 41px; padding: 0 10px; border-radius: 20px; background: var(--chip); }
            .rec { width: 20px; margin-left: 13px; justify-content: center; font-size: 20px; }
            .auto { margin: 0 19px 0 20px; }
            input { -webkit-appearance: none; appearance: none; width: 144px; height: 21px; }
            input::-webkit-slider-runnable-track {
                height: 17px; border-radius: 8px;
                background:
                    linear-gradient(90deg, var(--accent) var(--level), #dcdce0 var(--level)) 7px 5px / 130px 7px no-repeat,
                    var(--chip);
            }
            input::-webkit-slider-thumb { -webkit-appearance: none; width: 21px; height: 21px; margin-top: -2px; border-radius: 50%; background: #9f9cab; }
            .knob { width: 42px; height: 42px; margin-left: 15px; }
            .knob svg { display: block; overflow: visible; }
        `;
    }

    render() {
        const name = this.getAttribute('name');
        const volume = this.getAttribute('volume');
        return `
            <div class="avatar"><ui-icon name="wave" width="26" size="27"></ui-icon></div>
            <div class="body">
                <div class="top">
                    <span>${name}</span>
                    <button class="more" aria-label="${name} options"><ui-icon name="dots" width="17" size="20"></ui-icon></button>
                </div>
                <div class="controls">
                    <div class="pill">
                        <button aria-label="Mute"><ui-icon name="mute" size="22"></ui-icon></button>
                        <button aria-label="Solo"><ui-icon name="phones" size="20"></ui-icon></button>
                    </div>
                    <button class="rec">R</button>
                    <button class="auto" aria-label="Automation"><ui-icon name="automation" size="21"></ui-icon></button>
                    <input type="range" min="0" max="100" value="${volume}" style="--level:${volume}%" aria-label="${name} volume">
                    <div class="knob">
                        <svg width="42" height="42" viewBox="0 0 42 42">
                            <path d="M7 36A20 20 0 1 1 35 36" fill="none" stroke="#e3e3e5" stroke-width="2.500"/>
                            <circle cx="21" cy="21" r="16" fill="#ececed" stroke="#dcdcde" stroke-width="1.500"/>
                            <path d="M21 9v7" stroke="#1f1f22" stroke-width="3" stroke-linecap="round"/>
                        </svg>
                    </div>
                </div>
            </div>
        `;
    }
}

class TrackList extends StudioElement {
    styles() {
        return `
            :host { display: flex; flex-direction: column; gap: 7px; width: 485px; padding: 136px 7px 0; }
            .add { justify-content: center; gap: 5px; height: 62px; margin-top: 1px; border-radius: 12px; background: #e1e1e3; font-weight: 500; }
        `;
    }

    render() {
        return `
            <slot></slot>
            <button class="add"><ui-icon name="plus" size="22"></ui-icon>Add track</button>
        `;
    }
}

class TimeRuler extends StudioElement {
    styles() {
        return `
            :host { display: block; --line: linear-gradient(90deg, #cbcbce 2px, transparent 2px) 0 0 / calc(var(--section) / 4) 100%; }
            .names, .bars { display: flex; }
            .name { flex: none; width: var(--section); height: 40px; border: solid var(--app-bg); border-width: 0 2px 0 0; border-radius: 6px; background: #e1e1e3; background-clip: padding-box; display: grid; place-items: center; font-weight: 500; }
            .bars { margin-top: 3px; height: 83px; background: var(--line); font-size: 17px; font-weight: 600; }
            .span { flex: none; width: var(--section); display: grid; grid-template-columns: repeat(4, 1fr); padding-top: 10px; line-height: 28px; }
            .span span { padding-left: 7px; }
            .loop { background: var(--line), linear-gradient(#e1e1e3, #e1e1e3) 0 0 / 100% 42px no-repeat; border-top: 4px solid #7f7c95; border-radius: 6px 6px 0 0; padding-top: 6px; }
        `;
    }

    render() {
        const names = ['Low', 'Medium', 'High', 'Medium'];
        const span = (n) => [0, 2, 4, 6].map((k) => `<span>${n * 8 + k + 1}</span>`).join('');
        return `
            <div class="names">${names.map((n) => `<div class="name">${n}</div>`).join('')}</div>
            <div class="bars">${names.map((n, i) => `<div class="span${i ? '' : ' loop'}">${span(i)}</div>`).join('')}</div>
        `;
    }
}

class TrackLane extends StudioElement {
    styles() {
        const start = this.getAttribute('start') || 0;
        return `
            :host { display: flex; height: 107px; margin-bottom: 3px; padding-left: calc(var(--section) * ${start}); background: linear-gradient(90deg, #cbcbce 2px, transparent 2px) 0 0 / calc(var(--section) / 4) 100%, #eeeef0; overflow: hidden; }
            :host([selected]) { background-color: #e9e9eb; }
        `;
    }

    render() { return '<slot></slot>'; }
}

class AudioClip extends StudioElement {
    styles() {
        return `
            :host { display: flex; flex: none; height: 107px; font-size: 18px; color: #0c0c18; }
            :host([selected]) { border: 3px solid #29292d; border-radius: 12px; padding: 2px; background: #f4f4f8; color: #fff; font-weight: 500; }
            .part { position: relative; flex: none; width: var(--section); height: 100%; border-radius: 10px; overflow: hidden; }
            .part:last-of-type { width: calc(var(--section) - 2px); }
            :host([selected]) .part:first-of-type { width: calc(var(--section) - 5px); }
            .head { height: 28px; padding-left: 10px; line-height: 30px; white-space: nowrap; }
            :host([selected]) .head { height: 23px; padding-left: 5px; line-height: 20px; }
            svg { position: absolute; left: 0; top: 0; }
            :host([selected]) svg { top: -6px; }
            :host([selected]) .part:first-of-type svg { left: -5px; }
            .seam { border-right: 2px dashed #ffffffcc; position: absolute; right: 0; top: 28px; bottom: 8px; }
        `;
    }

    render() {
        const kind = this.getAttribute('kind');
        const wave = WAVES[kind];
        const count = Number(this.getAttribute('repeats'));
        const path = wavePath(wave, 534, 66);
        let html = '';
        for (let i = 0; i < count; i++) {
            const [head, body] = THEMES[kind][i ? 1 : 0];
            html += `
                <div class="part" style="background:${body}">
                    <div class="head" style="background:${head}">${i ? '' : '<slot></slot>'}</div>
                    <svg width="534" height="107" viewBox="0 0 534 107"><path d="${path}" fill="${wave.colors[i ? 1 : 0]}"/></svg>
                    ${i < count - 1 && !(kind === 'melody' && i) ? '<div class="seam"></div>' : ''}
                </div>
            `;
        }
        return html;
    }
}

class QuickAction extends StudioElement {
    styles() {
        return `
            :host { display: block; }
            button { flex-direction: column; width: 100%; height: 172px; padding: 25px 4px 0; border-radius: 12px; background: var(--panel); }
            ui-icon { color: #827e94; }
            .label { display: grid; place-items: center; height: 60px; margin-top: 17px; font-size: 22px; line-height: 29px; color: #3a3a3f; }
        `;
    }

    render() {
        return `
            <button>
                <ui-icon name="${this.getAttribute('icon')}" size="44" box="-1 -1 26 26"></ui-icon>
                <span class="label"><span><slot></slot></span></span>
            </button>
        `;
    }
}

class StudioTimeline extends StudioElement {
    styles() {
        return `
            :host { position: relative; display: flex; flex-direction: column; flex: 1; min-width: 0; padding-top: 8px; overflow: hidden; }
            .actions { display: grid; grid-template-columns: repeat(3, 181px); gap: 17px; justify-content: center; margin-top: 219px; padding-left: 162px; }
            .scroll { position: relative; height: 15px; margin: auto 0 16px 14px; border-radius: 8px 0 0 8px; background: #fdfdfd; z-index: 2; }
            .thumb { width: 611px; height: 15px; border-radius: 8px; background: #817e92; }
            .playhead { position: absolute; left: 289px; top: 100px; bottom: 0; width: 16px; }
            .playhead::after { content: ""; position: absolute; left: 7px; top: 30px; bottom: 0; width: 2px; background: #3a3a3e; }
            .playhead svg { display: block; }
        `;
    }

    render() {
        return `
            <time-ruler></time-ruler>
            <track-lane start="2"><audio-clip kind="drums" repeats="2">Y2K - Peaches (Full Beat)</audio-clip></track-lane>
            <track-lane start="1"><audio-clip kind="chords" repeats="2">Genin - Change (Chords &amp; FX) <b>C</b></audio-clip></track-lane>
            <track-lane start="2" selected><audio-clip kind="bass" repeats="2" selected>Genin - Change (Bass Reese) <b>C</b></audio-clip></track-lane>
            <track-lane><audio-clip kind="melody" repeats="3">Nerve - Warm Blanket <b>Am</b></audio-clip></track-lane>
            <div class="actions">
                <quick-action icon="notes">Browse<br>loops</quick-action>
                <quick-action icon="pads">Patterns<br>Beatmaker</quick-action>
                <quick-action icon="piano">Play the<br>synth</quick-action>
                <quick-action icon="add">Add new<br>track</quick-action>
                <quick-action icon="importFile">Import file</quick-action>
                <quick-action icon="invite">Invite a<br>friend</quick-action>
            </div>
            <div class="scroll"><div class="thumb"></div></div>
            <div class="playhead"><svg width="16" height="33" viewBox="0 0 16 33"><path d="M.5 7.500a7.500 7.500 0 0 1 15 0V24L8 32.500.5 24z" fill="#29292c"/></svg></div>
        `;
    }
}

class TransportBar extends StudioElement {
    styles() {
        return `
            :host { display: flex; align-items: center; height: 83px; margin: 0 0 6px 6px; padding-left: 15px; border-radius: 12px 0 0 12px; background: var(--panel); }
            button { justify-content: center; height: 55px; }
            .soft { background: #ebebec; border-radius: 12px; }
            .master { width: 258px; font-weight: 500; }
            .meters { display: grid; gap: 4px; width: 101px; margin: 0 12px 0 14px; }
            .meter { height: 8px; border-radius: 4px; background: linear-gradient(90deg, #568f1c 70%, #ebebec 70% 76%, #b9a45c 76% 78%, #dededf 78%); }
            .meter.low { background: linear-gradient(90deg, #568f1c 67%, #ebebec 67% 72%, #4d4f45 72% 74%, #dededf 74%); }
            .time { width: 103px; margin-left: 702px; font-size: 25px; white-space: nowrap; }
            .rule { width: 2px; height: 28px; background: #d9d9dc; margin: 0 55px 0 49px; }
            .rule.late { margin-left: 55px; }
            .rec { width: 120px; gap: 6px; }
            .rec i { width: 22px; height: 22px; border-radius: 50%; background: #b80044; }
            .group { display: flex; margin: 0 7px 0 6px; }
            .group button { width: 69px; }
            .group .play { background: #28272e; color: #fff; border-radius: 12px; }
            .loop { width: 69px; }
            .key { width: 40px; margin-left: 14px; font-size: 24px; }
            .tempo { margin-left: 72px; font-size: 24px; }
            .tempo small { font-size: 20px; color: #5d5d63; margin-left: 9px; padding-top: 6px; }
            .sig { margin: 0 48px 0 50px; font-size: 24px; }
            .click { margin-right: 23px; }
        `;
    }

    render() {
        return `
            <button class="master soft">Master
                <span class="meters"><span class="meter"></span><span class="meter low"></span></span>
                <ui-icon name="thinChevron" size="20"></ui-icon>
            </button>
            <span class="time">00:08 . 8</span>
            <span class="rule"></span>
            <button class="rec soft"><i></i>Rec</button>
            <div class="group soft">
                <button class="play" aria-label="Pause"><ui-icon name="pause" size="26"></ui-icon></button>
                <button aria-label="Back to start"><ui-icon name="toStart" size="24"></ui-icon></button>
                <button aria-label="Rewind"><ui-icon name="rewind" size="26"></ui-icon></button>
                <button aria-label="Fast forward"><ui-icon name="fastForward" size="26"></ui-icon></button>
            </div>
            <button class="loop soft" aria-label="Loop"><ui-icon name="loop" size="26"></ui-icon></button>
            <span class="rule late"></span>
            <button class="key">C</button>
            <button class="tempo">120 <small>bpm</small></button>
            <button class="sig">4/4</button>
            <button class="click" aria-label="Metronome"><ui-icon name="metronome" size="27"></ui-icon></button>
            <button aria-label="Metronome settings"><ui-icon name="thinChevron" size="18"></ui-icon></button>
        `;
    }
}

class TaskIcon extends StudioElement {
    styles() {
        return `
            :host { position: relative; display: block; flex: none; width: 63px; height: 64px; }
            button { justify-content: center; width: 100%; height: 64px; }
            :host([state])::after { content: ""; position: absolute; left: 27px; bottom: 4px; width: 9px; height: 4px; border-radius: 2px; background: #8f827e; }
            :host([state="busy"])::after { left: 16px; width: 32px; height: 2px; border-left: 2px solid #0b76c8; }
            :host([state="active"])::after { left: 22px; width: 23px; background: #0a6fc2; }
            :host([state="active"]) button { width: 52px; height: 55px; margin: 5px 0 0 7px; border-radius: 6px; background: #f6f2ef; box-shadow: 2px 0 0 #eae6e3; }
        `;
    }

    render() {
        return `<button aria-label="${this.getAttribute('label')}"><ui-icon name="${this.getAttribute('icon')}" size="34"></ui-icon></button>`;
    }
}

class TaskBar extends StudioElement {
    styles() {
        return `
            :host { display: flex; align-items: center; height: 65px; border-top: 2px solid #b7b0a8; padding-left: 28px; background: linear-gradient(90deg, #e5dccb, #ebddd3 16%, #f1e0da 35%, #f2dfd9 60%, #f3e0d6 85%, #dfdbd8); font-family: "Open Sans", sans-serif; overflow: hidden; }
            .weather { position: relative; gap: 11px; width: 516px; text-align: left; font-size: 17px; line-height: 23px; color: #1f1a14; }
            .weather small { display: block; font-size: 17px; color: #5b554d; }
            .badge { position: absolute; left: 16px; top: -4px; width: 22px; height: 22px; border-radius: 50%; background: #c3242b; color: #fff; text-align: center; font-size: 15px; line-height: 22px; }
            .start { margin-right: 21px; }
            .search { display: flex; align-items: center; width: 314px; height: 44px; padding: 0 7px 0 14px; border-radius: 22px; background: #fdf7f3; box-shadow: 0 1px 2px #b9aaa1; color: #2a2624; }
            .search input { flex: 1; margin-left: 14px; font-size: 21px; }
            .search input::placeholder { color: #6a6360; opacity: 1; }
            .apps { display: flex; margin-left: 3px; }
        `;
    }

    render() {
        const apps = [
            ['taskView', 'Task view'], ['settings', 'Settings'], ['pointer', 'Pointer'], ['whatsapp', 'WhatsApp'],
            ['folder', 'File Explorer', 'open'], ['zoomApp', 'Zoom', 'open'], ['teams', 'Teams'], ['bridge', 'Bridge'],
            ['creative', 'Creative Cloud'], ['premiere', 'Premiere Pro', 'open'], ['encoder', 'Media Encoder', 'busy'],
            ['burst', 'Loom'], ['mint', 'Streamlabs'], ['obs', 'OBS Studio', 'open'], ['capcut', 'CapCut'], ['snip', 'Snip'],
            ['itunes', 'iTunes'], ['spotify', 'Spotify'], ['pulse', 'Audio'], ['live', 'Ableton Live'],
            ['voicemeeter', 'Voicemeeter', 'open'], ['fox', 'Foxit'], ['magnify', 'Magnifier'], ['fruit', 'Fruit'],
            ['chrome', 'Chrome', 'active'],
        ];
        return `
            <button class="weather">
                <ui-icon name="warning" size="35"></ui-icon>
                <span class="badge">1</span>
                <span>Air quality alert<small>In effect</small></span>
            </button>
            <button class="start" aria-label="Start"><ui-icon name="windows" size="33"></ui-icon></button>
            <label class="search">
                <ui-icon name="search" size="24"></ui-icon>
                <input type="search" placeholder="Search" aria-label="Search">
                <ui-icon name="skyline" width="70" size="38" box="0 0 70 38"></ui-icon>
            </label>
            <div class="apps">
                ${apps.map(([icon, label, state]) => `<task-icon icon="${icon}" label="${label}"${state ? ` state="${state}"` : ''}></task-icon>`).join('')}
            </div>
        `;
    }
}

class StudioWindow extends StudioElement {
    styles() {
        return `
            :host { display: flex; flex-direction: column; height: 100vh; background: var(--app-bg); }
            main { flex: 1; display: flex; min-height: 0; }
            .cursor { position: absolute; left: 2163px; top: 1187px; }
        `;
    }

    render() {
        return `
            <browser-tabs></browser-tabs>
            <browser-toolbar></browser-toolbar>
            <studio-header></studio-header>
            <main>
                <track-list>
                    <track-card name="DRUMS" volume="60"></track-card>
                    <track-card name="CHORDS" volume="60"></track-card>
                    <track-card name="BASS" volume="65" selected></track-card>
                    <track-card name="MELODY" volume="58"></track-card>
                </track-list>
                <studio-timeline></studio-timeline>
            </main>
            <transport-bar></transport-bar>
            <task-bar></task-bar>
            <svg class="cursor" width="16" height="23" viewBox="0 0 16 23"><path d="M2 1.500v17l4-3.700 2.700 6.200 2.800-1.200-2.700-6h5.400z" fill="#fff" stroke="#55555a" stroke-width="1.300"/></svg>
        `;
    }
}

customElements.define('ui-icon', UiIcon);
customElements.define('browser-tabs', BrowserTabs);
customElements.define('browser-toolbar', BrowserToolbar);
customElements.define('studio-header', StudioHeader);
customElements.define('track-card', TrackCard);
customElements.define('track-list', TrackList);
customElements.define('time-ruler', TimeRuler);
customElements.define('track-lane', TrackLane);
customElements.define('audio-clip', AudioClip);
customElements.define('quick-action', QuickAction);
customElements.define('studio-timeline', StudioTimeline);
customElements.define('transport-bar', TransportBar);
customElements.define('task-icon', TaskIcon);
customElements.define('task-bar', TaskBar);
customElements.define('studio-window', StudioWindow);
</script>
</body>
</html>
